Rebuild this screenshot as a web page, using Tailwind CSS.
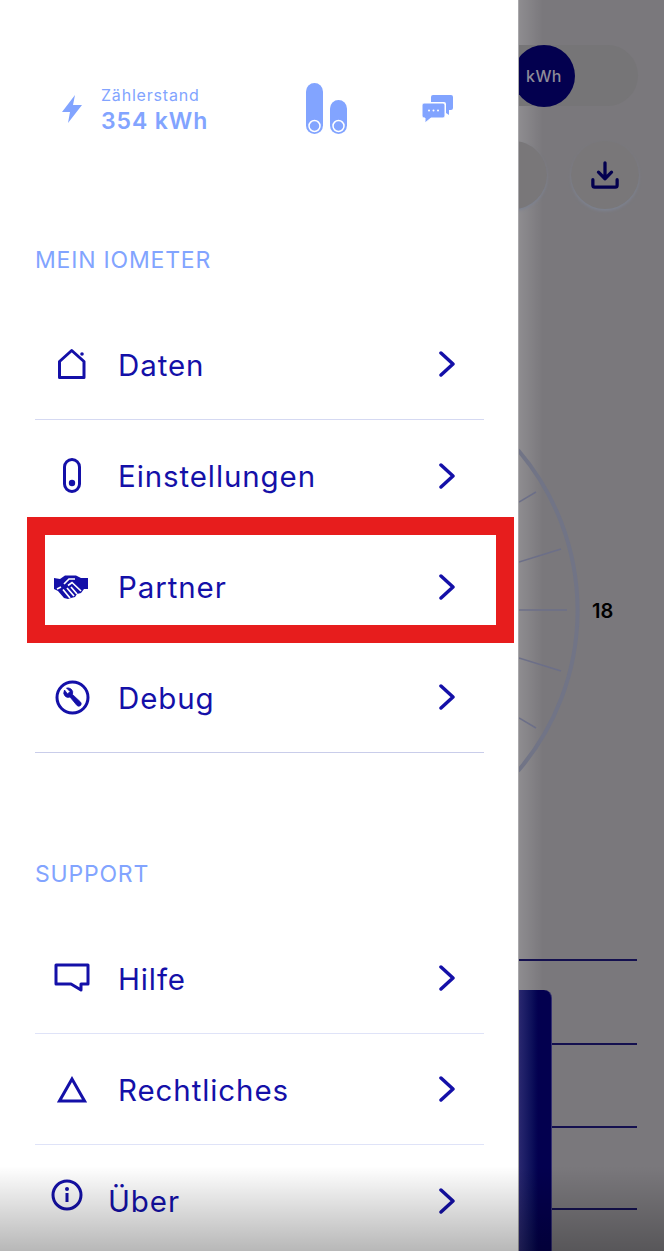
<!DOCTYPE html>
<html lang="de">
<head>
    <meta charset="UTF-8">
    <title>Menü</title>
    <script src="https://cdn.jsdelivr.net/npm/@tailwindcss/browser@4"></script>
</head>
<body class="bg-white">
    <div class="relative flex w-[664px] h-[1251px] overflow-hidden font-['Inter',sans-serif]">

        <!-- drawer -->
        <div class="w-[518px] shrink-0 bg-white text-[#1410a8]">
            <div class="flex items-center h-[247px] pb-[29px] pl-[60px] text-[#82a4ff]">
                <svg class="w-[24px] h-[30px]" viewBox="0 0 24 30"><path fill="currentColor" d="M15 1 L2 18 H10 L8 29 L22 11 H13 Z"/></svg>
                <div class="ml-[17px] w-[204px] pt-[2px]">
                    <div class="text-[16px] leading-[19px] tracking-[0.8px]">Zählerstand</div>
                    <div class="mt-[2px] text-[23px] leading-[28px] font-semibold tracking-[0.9px]">354 kWh</div>
                </div>
                <svg class="w-[44px] h-[52px]" viewBox="0 0 44 52">
                    <rect x="1" y="0" width="17" height="51" rx="8.5" fill="currentColor"/>
                    <rect x="25" y="17" width="17" height="34" rx="8.5" fill="currentColor"/>
                    <circle cx="9.5" cy="43" r="5.5" fill="currentColor" stroke="#fff" stroke-width="1.5"/>
                    <circle cx="33.5" cy="43" r="5.5" fill="currentColor" stroke="#fff" stroke-width="1.5"/>
                </svg>
                <svg class="ml-[72px] w-[33px] h-[29px]" viewBox="0 0 33 29">
                    <path fill="currentColor" d="M12 0 H30 Q32 0 32 2 V13 Q32 15 30 15 H28 V20 L25 18 V9 Q25 7 23 7 H10 V2 Q10 0 12 0 Z"/>
                    <path fill="currentColor" stroke="#fff" stroke-width="1" d="M3 8 H22 Q24 8 24 10 V21 Q24 23 22 23 H10 L4 28 V23 H3 Q1 23 1 21 V10 Q1 8 3 8 Z"/>
                    <circle cx="8" cy="15.5" r="1" fill="#fff"/><circle cx="12.5" cy="15.5" r="1" fill="#fff"/><circle cx="17" cy="15.5" r="1" fill="#fff"/>
                </svg>
            </div>

            <div class="pl-[35px] text-[23px] leading-[26px] tracking-[0.8px] text-[#82a4ff]">MEIN IOMETER</div>

            <ul class="mt-[36px] ml-[35px] w-[449px] text-[29.5px] tracking-[0.9px]">
                <li class="flex items-center h-[111px] border-b border-[#d5d9f2]">
                    <span class="flex justify-center w-[74px]">
                        <svg class="w-[30px] h-[32px]" viewBox="0 0 30 32"><path fill="none" stroke="currentColor" stroke-width="3" stroke-linejoin="round" d="M14.7 2.5 L2.5 13.5 V29.5 H27 V13.5 Z"/><circle cx="25" cy="6" r="1.8" fill="currentColor"/></svg>
                    </span>
                    <span class="ml-[9px] pt-[2px] flex-1">Daten</span>
                    <svg class="w-[18px] h-[26px] mr-[28px]" viewBox="0 0 18 26"><path fill="none" stroke="currentColor" stroke-width="3.5" stroke-linecap="round" stroke-linejoin="round" d="M3 2 L15 13 L3 24"/></svg>
                </li>
                <li class="flex items-center h-[111px]">
                    <span class="flex justify-center w-[74px]">
                        <svg class="w-[18px] h-[35px]" viewBox="0 0 18 35"><rect x="1.5" y="1.5" width="15" height="32" rx="7.5" fill="none" stroke="currentColor" stroke-width="3"/><circle cx="9" cy="25" r="3.2" fill="currentColor"/></svg>
                    </span>
                    <span class="ml-[9px] pt-[2px] flex-1">Einstellungen</span>
                    <svg class="w-[18px] h-[26px] mr-[28px]" viewBox="0 0 18 26"><path fill="none" stroke="currentColor" stroke-width="3.5" stroke-linecap="round" stroke-linejoin="round" d="M3 2 L15 13 L3 24"/></svg>
                </li>
                <li class="flex items-center h-[111px]">
                    <span class="flex justify-center w-[74px] -ml-[1px] mr-[1px]">
                        <svg class="w-[34px] h-[26px]" viewBox="0 0 34 26">
                            <path fill="currentColor" d="M0 4 L6 5 L11 1.5 H22 L27 4 H34 V15 H30 L27 19 L23 20 L21 23 L17 24 L14 25 L10 24 L4 17 L0 15 Z"/>
                            <path fill="none" stroke="#fff" stroke-width="1.7" d="M10 10 L15 5 H21 M14 11.5 L18 8.5 L27 17 M3 15 L7 13 M9 15.5 L16 24 M13 14 L20 22 M17 13 L23 20"/>
                        </svg>
                    </span>
                    <span class="ml-[9px] pt-[2px] flex-1">Partner</span>
                    <svg class="w-[18px] h-[26px] mr-[28px]" viewBox="0 0 18 26"><path fill="none" stroke="currentColor" stroke-width="3.5" stroke-linecap="round" stroke-linejoin="round" d="M3 2 L15 13 L3 24"/></svg>
                </li>
                <li class="flex items-center h-[111px] border-b border-[#c9cdea]">
                    <span class="flex justify-center w-[74px]">
                        <svg class="w-[35px] h-[35px]" viewBox="0 0 35 35"><circle cx="17.5" cy="17.5" r="15.5" fill="none" stroke="currentColor" stroke-width="3"/><path fill="currentColor" stroke="currentColor" stroke-width="0.8" d="M9.5 10 Q7.5 14 10.5 16.5 Q12.5 18 15 17 L22 25.5 Q24 27 25.5 25.5 Q27 24 25.5 22 L17.5 14.5 Q18.5 11 16 9 Q14 7.5 11.5 8 L15 11.5 L12.5 14 Z"/></svg>
                    </span>
                    <span class="ml-[9px] pt-[2px] flex-1">Debug</span>
                    <svg class="w-[18px] h-[26px] mr-[28px]" viewBox="0 0 18 26"><path fill="none" stroke="currentColor" stroke-width="3.5" stroke-linecap="round" stroke-linejoin="round" d="M3 2 L15 13 L3 24"/></svg>
                </li>
            </ul>

            <div class="mt-[108px] pl-[35px] text-[23px] leading-[26px] tracking-[0.8px] text-[#82a4ff]">SUPPORT</div>

            <ul class="mt-[36px] ml-[35px] w-[449px] text-[29.5px] tracking-[0.9px]">
                <li class="flex items-center h-[111px] border-b border-[#dfe3f8]">
                    <span class="flex justify-center w-[74px]">
                        <svg class="w-[36px] h-[30px]" viewBox="0 0 36 30"><path fill="none" stroke="currentColor" stroke-width="3" stroke-linejoin="round" d="M2 2 H34 V21 H27 V27 L17 21 H2 Z"/></svg>
                    </span>
                    <span class="ml-[9px] pt-[2px] flex-1">Hilfe</span>
                    <svg class="w-[18px] h-[26px] mr-[28px]" viewBox="0 0 18 26"><path fill="none" stroke="currentColor" stroke-width="3.5" stroke-linecap="round" stroke-linejoin="round" d="M3 2 L15 13 L3 24"/></svg>
                </li>
                <li class="flex items-center h-[111px] border-b border-[#dfe3f8]">
                    <span class="flex justify-center w-[74px]">
                        <svg class="w-[30px] h-[27px]" viewBox="0 0 30 27"><path fill="none" stroke="currentColor" stroke-width="3" d="M15 3 L27.5 25 H2.5 Z"/></svg>
                    </span>
                    <span class="ml-[9px] pt-[2px] flex-1">Rechtliches</span>
                    <svg class="w-[18px] h-[26px] mr-[28px]" viewBox="0 0 18 26"><path fill="none" stroke="currentColor" stroke-width="3.5" stroke-linecap="round" stroke-linejoin="round" d="M3 2 L15 13 L3 24"/></svg>
                </li>
                <li class="flex items-center h-[111px]">
                    <span class="flex justify-center w-[64px]">
                        <svg class="w-[32px] h-[32px] -mt-[12px]" viewBox="0 0 32 32"><circle cx="16" cy="16" r="14" fill="none" stroke="currentColor" stroke-width="3"/><rect x="14.5" y="14" width="3" height="9" fill="currentColor"/><circle cx="16" cy="10" r="2" fill="currentColor"/></svg>
                    </span>
                    <span class="ml-[9px] pt-[2px] flex-1">Über</span>
                    <svg class="w-[18px] h-[26px] mr-[28px]" viewBox="0 0 18 26"><path fill="none" stroke="currentColor" stroke-width="3.5" stroke-linecap="round" stroke-linejoin="round" d="M3 2 L15 13 L3 24"/></svg>
                </li>
            </ul>
        </div>

        <!-- dimmed screen behind the drawer -->
        <div class="relative flex-1 overflow-hidden bg-[#7a787c] border-l border-[#a9a8ab]">
            <div class="absolute left-0 top-0 w-[24px] h-full bg-gradient-to-r from-white/15 to-transparent"></div>
            <div class="absolute left-0 top-[45px] w-[119px] h-[61px] rounded-r-full bg-[#767577]"></div>
            <div class="absolute -left-[6px] top-[45px] w-[62px] h-[62px] rounded-full bg-[#03004f] flex items-center justify-center text-[16px] tracking-[0.4px] font-medium text-[#8d8b98]">kWh</div>
            <div class="absolute -left-[40px] top-[141px] w-[68px] h-[68px] rounded-full bg-[#797779] shadow-[0_2px_3px_#7d8290]"></div>
            <div class="absolute left-[52px] top-[141px] w-[68px] h-[68px] rounded-full bg-[#797779] shadow-[0_2px_3px_#7d8290] flex items-center justify-center">
                <svg class="w-[28px] h-[28px]" viewBox="0 0 30 30"><path fill="none" stroke="#03004f" stroke-width="3.5" stroke-linecap="round" stroke-linejoin="round" d="M15 2 V19 M8 12 L15 19 L22 12 M2 20 V26 Q2 28 4 28 H26 Q28 28 28 26 V20"/></svg>
            </div>
            <svg class="absolute left-0 top-[430px] w-[146px] h-[360px]" viewBox="0 0 146 360" fill="none">
                <path stroke="#717486" stroke-width="4" d="M-1 20 A246 246 0 0 1 -1 341"/>
                <g stroke="#6c6f88" stroke-width="1.5">
                    <path d="M0 72 L17 62"/><path d="M0 132 L42 119"/><path d="M0 180 L48 180"/><path d="M0 228 L42 241"/><path d="M0 288 L17 298"/>
                </g>
            </svg>
            <span class="absolute left-[73px] top-[600px] text-[20px] leading-[22px] font-semibold text-black">18</span>
            <div class="absolute left-0 top-[959px] w-[118px] border-t-2 border-[#14104f]"></div>
            <div class="absolute left-0 top-[1043px] w-[118px] border-t-2 border-[#14104f]"></div>
            <div class="absolute left-0 top-[1126px] w-[118px] border-t-2 border-[#14104f]"></div>
            <div class="absolute left-0 top-[1208px] w-[118px] border-t-2 border-[#14104f]"></div>
            <div class="absolute left-0 top-[990px] w-[33px] h-[270px] rounded-tr-lg border-r border-[#33306f] bg-gradient-to-r from-[#2a2870] to-[#03004f] to-60%"></div>
        </div>

        <!-- bottom fade -->
        <div class="absolute left-0 bottom-0 w-full h-[85px] bg-gradient-to-b from-transparent to-black/28 pointer-events-none"></div>

        <!-- highlight frame -->
        <div class="absolute left-[27px] top-[517px] w-[487px] h-[126px] border-[18px] border-[#e71d1d]"></div>
    </div>
</body>
</html>
